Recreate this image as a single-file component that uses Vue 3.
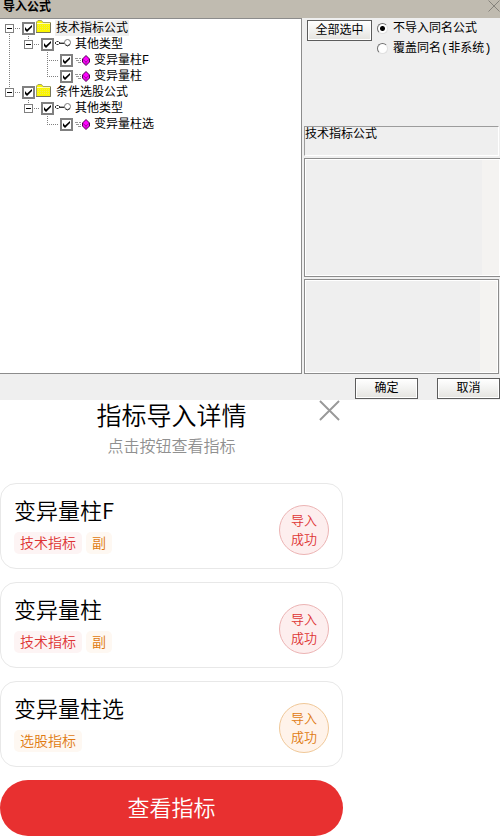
<template>
  <div class="page">
    <section class="dialog">
      <header class="titlebar">
        <h1>导入公式</h1>
        <button class="title-close" aria-label="关闭">
          <svg width="12" height="12" viewBox="0 0 12 12">
            <path d="M0.5 0.5L11.5 11.5M11.5 0.5L0.5 11.5" stroke="#86837c" fill="none" />
          </svg>
        </button>
      </header>

      <div class="body">
        <ul class="tree">
          <li v-for="row in rows" :key="row.id" class="row">
            <svg v-for="(c, i) in row.cells" :key="i" class="cell" width="19" height="16" viewBox="0 0 19 16">
              <g stroke="#808080" stroke-dasharray="1 1">
                <path v-if="c.includes('u')" d="M9.5 0V8" />
                <path v-if="c.includes('d')" d="M9.5 8V16" />
                <path v-if="c.includes('r')" d="M9 8.5H21" />
              </g>
              <g v-if="c.includes('b')">
                <rect x="5.5" y="4.5" width="8" height="8" fill="#fff" stroke="#808080" />
                <path d="M7 8.5H12" stroke="#000" />
              </g>
            </svg>
            <label class="node">
              <span class="check">
                <input type="checkbox" v-model="row.checked" />
                <svg v-if="row.checked" width="13" height="13" viewBox="0 0 13 13">
                  <path d="M3 5V8L5 10L10 5V3L5 7.5Z" fill="#000" />
                </svg>
              </span>
              <svg v-if="row.icon === 'folder'" class="icon" width="16" height="16" viewBox="0 0 16 16">
                <path d="M0.5 12.5V2L2 0.5H5.5L7 2.5H14.5V12.5Z" fill="#fbf600" stroke="#a3a36a" />
                <path d="M1 3.5H14" stroke="#fffcb0" />
                <path d="M2 5.5H14M2 7.5H14M2 9.5H14" stroke="#ece85a" stroke-dasharray="1 1" />
                <path d="M0 12.5H14.5V3" fill="none" stroke="#77775c" />
              </svg>
              <svg v-else-if="row.icon === 'key'" class="icon" width="16" height="16" viewBox="0 0 16 16">
                <path d="M1.5 5.5H3.5M1.5 8.5H3.5M0.5 6V8M4.5 6V8M4 7.5H10" fill="none" stroke="#333" />
                <path d="M5 6.5H10" stroke="#aaa" />
                <circle cx="12.5" cy="6.5" r="3" fill="#fff" stroke="#777" />
                <path d="M10.5 9L12.5 10L15 8.5" fill="none" stroke="#333" />
              </svg>
              <svg v-else class="icon" width="16" height="16" viewBox="0 0 16 16">
                <path d="M1 6.5H7M2 8.5H7M4 10.5H8" stroke="#999" stroke-dasharray="3 1" />
                <path d="M12 3.5L15.5 7V10L12 13.5L8.5 10V7Z" fill="#f0f" stroke="#500050" />
                <path d="M9 7.5L12 10L15 7.5M12 10V13" fill="none" stroke="#a010a0" />
              </svg>
              <span class="name" :class="{ current: row.id === 1 }">{{ row.name }}</span>
            </label>
          </li>
        </ul>

        <div class="side">
          <div class="options">
            <button class="btn" @click="selectAll">全部选中</button>
            <div class="radios">
              <label><input type="radio" name="mode" value="skip" v-model="mode" /><span>不导入同名公式</span></label>
              <label><input type="radio" name="mode" value="cover" v-model="mode" /><span>覆盖同名(非系统)</span></label>
            </div>
          </div>
          <p class="kind">技术指标公式</p>
          <textarea class="info wide" aria-label="公式说明" readonly></textarea>
          <textarea class="info" aria-label="公式备注" readonly></textarea>
        </div>
      </div>

      <footer class="actions">
        <button class="btn">确定</button>
        <button class="btn">取消</button>
      </footer>
    </section>

    <section class="detail">
      <header class="head">
        <h2>指标导入详情</h2>
        <p>点击按钮查看指标</p>
        <button class="close" aria-label="关闭">
          <svg width="21" height="21" viewBox="0 0 22 22">
            <path d="M1 1L21 21M21 1L1 21" stroke="#999" stroke-width="2" fill="none" />
          </svg>
        </button>
      </header>

      <article v-for="card in cards" :key="card.name" class="card">
        <div>
          <h3>{{ card.name }}</h3>
          <div class="tags">
            <span v-for="t in card.tags" :key="t.text" class="tag" :class="t.color">{{ t.text }}</span>
          </div>
        </div>
        <span class="badge" :class="card.color">导入<br />成功</span>
      </article>

      <button class="view">查看指标</button>
    </section>
  </div>
</template>

<script setup>
import { ref } from 'vue'

const mode = ref('skip')

// cells: u=上 d=下 r=右 b=折叠框
const rows = ref([
  { id: 1, name: '技术指标公式', icon: 'folder', cells: ['drb'], checked: true },
  { id: 2, name: '其他类型', icon: 'key', cells: ['ud', 'urb'], checked: true },
  { id: 3, name: '变异量柱F', icon: 'item', cells: ['ud', '', 'udr'], checked: true },
  { id: 4, name: '变异量柱', icon: 'item', cells: ['ud', '', 'ur'], checked: true },
  { id: 5, name: '条件选股公式', icon: 'folder', cells: ['urb'], checked: true },
  { id: 6, name: '其他类型', icon: 'key', cells: ['', 'urb'], checked: true },
  { id: 7, name: '变异量柱选', icon: 'item', cells: ['', '', 'ur'], checked: true },
])

const cards = [
  { name: '变异量柱F', color: 'red', tags: [{ text: '技术指标', color: 'red' }, { text: '副', color: 'orange' }] },
  { name: '变异量柱', color: 'red', tags: [{ text: '技术指标', color: 'red' }, { text: '副', color: 'orange' }] },
  { name: '变异量柱选', color: 'orange', tags: [{ text: '选股指标', color: 'orange' }] },
]

function selectAll() {
  rows.value.forEach((r) => { r.checked = true })
}
</script>

<style>
body { background: #fff; }
</style>

<style scoped>
* { box-sizing: border-box; }
h1, h2, h3, p, ul { margin: 0; padding: 0; font-weight: inherit; }
button { font-family: inherit; font-weight: inherit; cursor: pointer; }
svg { display: block; flex: none; }

/* 导入对话框 */
.dialog {
  margin-right: 1px;
  background: #efefef;
  color: #000;
  font: 12px/16px "Liberation Mono", "Noto Sans CJK SC", sans-serif;
}
.titlebar {
  display: flex; align-items: flex-start; justify-content: space-between;
  height: 18px; padding-left: 3px;
  background: #c0bbb0;
}
.titlebar h1 { font-size: 12px; line-height: 16px; font-weight: bold; }
.title-close { padding: 0; border: 0; background: none; }
.body { display: flex; }
.tree {
  flex: 3; min-width: 0; padding-top: 1px;
  list-style: none; background: #fff;
  border: 1px solid #8c8c8c; border-left: 0;
}
.row { display: flex; height: 16px; }
.cell { overflow: visible; }
.node { display: flex; align-items: center; padding-left: 3px; }
.check { display: grid; margin-right: 1px; }
.check > * { grid-area: 1 / 1; pointer-events: none; }
.check input {
  appearance: none; width: 13px; height: 13px; margin: 0;
  background: #fff; border: 2px solid #808080;
}
.name { margin-left: 3px; padding: 2px 1px 0; line-height: 14px; white-space: nowrap; }
.current { background: #efefef; }

.side {
  flex: none; display: flex; flex-direction: column;
  width: 198px; padding-left: 2px;
}
.options { display: flex; gap: 5px; height: 108px; padding: 2px 0 0 3px; }
.btn {
  width: 63px; height: 21px; padding: 2px 0 0;
  font-size: 12px; line-height: 17px; color: #000;
  border: 1px solid #5c5c5c; border-radius: 0;
  background: linear-gradient(#fff, #f2f2f0 50%, #e4e3df);
  box-shadow: inset 0 0 0 1px #fff;
}
.options .btn { width: 65px; }
.radios { display: flex; flex-direction: column; gap: 4px; }
.radios label { display: flex; align-items: center; gap: 5px; white-space: nowrap; }
.radios span { padding-top: 2px; line-height: 14px; }
.radios input {
  appearance: none; width: 11px; height: 11px; margin: 0;
  border: 1px solid; border-color: #707070 #e0e0e0 #e0e0e0 #707070;
  border-radius: 50%; background: #fff;
}
.radios input:checked { background: radial-gradient(circle, #000 2px, #fff 3px); }
.kind {
  height: 30px; margin: 0 1px 2px 0;
  line-height: 16px;
  border: 1px solid; border-color: #9c9c9c #fff #fff #9c9c9c;
}
.info {
  display: block; width: 195px; height: 95px; padding: 0;
  resize: none; outline: 0; border: 1px solid #8c8c8c; border-radius: 0;
  box-shadow: inset 0 0 0 1px #fff;
  background: linear-gradient(to left, #f4f3f1 18px, #efefef 18px);
}
.info.wide { width: 100%; height: 119px; margin-bottom: 2px; border-right: 0; }
.actions { display: flex; justify-content: flex-end; gap: 19px; padding: 4px 0 1px; }

/* 指标导入详情 */
.detail {
  max-width: 343px;
  font-family: "Noto Sans CJK SC", sans-serif;
  font-weight: 350;
  color: #000;
}
.head { position: relative; padding-bottom: 21px; text-align: center; }
.head h2 { font-size: 25px; line-height: 28px; }
.head p { font-size: 16px; line-height: 34px; color: #909090; }
.close {
  position: absolute; top: 0; right: 3px;
  padding: 0; border: 0; background: none;
}
.card {
  display: flex; align-items: flex-end; justify-content: space-between;
  margin-bottom: 13px; padding: 12px 13px 13px;
  border: 1px solid #e8e8e8; border-radius: 16px;
}
.card h3 { font-size: 22px; line-height: 26px; }
.tags { display: flex; gap: 4px; margin: 10px 0 1px; }
.tag { padding: 0 6px 2px; border-radius: 5px; font-size: 14px; line-height: 20px; }
.tag.red { color: #d33; background: #fdf4f4; }
.tag.orange { color: #e07a10; background: #fef8f2; }
.badge {
  width: 50px; height: 50px; padding-top: 4px;
  border: 1px solid; border-radius: 50%;
  font-size: 13px; line-height: 19px; text-align: center;
}
.badge.red { color: #d33; background: #fdeeee; border-color: #ecb4b4; }
.badge.orange { color: #e07a10; background: #fff3ea; border-color: #f0c898; }
.view {
  width: 100%; height: 56px; padding: 0 0 4px;
  border: 0; border-radius: 28px;
  background: #e83030; color: #fff; font-size: 22px;
}
</style>
